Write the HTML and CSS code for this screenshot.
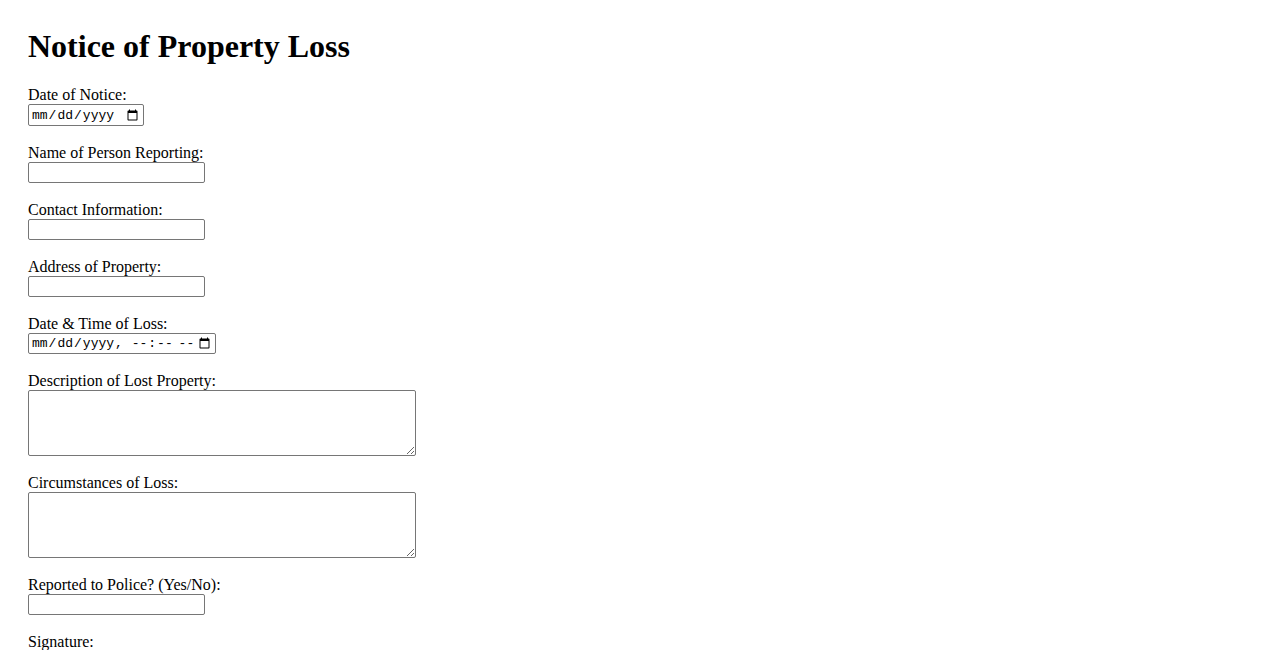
FILE: index.html
```html
<!DOCTYPE html>
<html lang="en">
<head>
<meta charset="utf-8">
<title>Notice of Property Loss</title>
<link rel="stylesheet" href="styles.css">
</head>
<body>
<div class="page">
  <h1 class="title">Notice of Property Loss</h1>
  <form class="form">
    <div class="field">
      <label class="label" for="notice-date">Date of Notice:</label>
      <input class="input input-date" type="date" id="notice-date">
    </div>
    <div class="field">
      <label class="label" for="reporter">Name of Person Reporting:</label>
      <input class="input input-text" type="text" id="reporter">
    </div>
    <div class="field">
      <label class="label" for="contact">Contact Information:</label>
      <input class="input input-text" type="text" id="contact">
    </div>
    <div class="field">
      <label class="label" for="address">Address of Property:</label>
      <input class="input input-text" type="text" id="address">
    </div>
    <div class="field">
      <label class="label" for="loss-time">Date &amp; Time of Loss:</label>
      <input class="input input-datetime" type="datetime-local" id="loss-time">
    </div>
    <div class="field">
      <label class="label" for="description">Description of Lost Property:</label>
      <textarea class="input input-area" id="description"></textarea>
    </div>
    <div class="field">
      <label class="label" for="circumstances">Circumstances of Loss:</label>
      <textarea class="input input-area" id="circumstances"></textarea>
    </div>
    <div class="field">
      <label class="label" for="police">Reported to Police? (Yes/No):</label>
      <input class="input input-text" type="text" id="police">
    </div>
    <div class="field">
      <label class="label" for="signature">Signature:</label>
      <input class="input input-text" type="text" id="signature">
    </div>
  </form>
</div>
</body>
</html>
```
FILE: styles.css
```css
html, body {
  margin: 0;
  padding: 0;
  background: #ffffff;
}

body {
  font-family: "Liberation Serif", "Times New Roman", serif;
  font-size: 16px;
  color: #000000;
}

.page {
  padding: 28px;
}

.title {
  margin: 0 0 21px 0;
  font-size: 32px;
  font-weight: bold;
  line-height: 37px;
}

.form {
  display: flex;
  flex-direction: column;
  gap: 18px;
}

.field {
  display: flex;
  flex-direction: column;
  align-items: flex-start;
}

.label {
  display: block;
  line-height: 18px;
  height: 18px;
}

.input {
  box-sizing: border-box;
  margin: 0;
  border: 1px solid #767676;
  border-radius: 2px;
  background: #ffffff;
  color: #000000;
  font-family: "Liberation Mono", "DejaVu Sans Mono", monospace;
  font-size: 13px;
  padding: 1px 2px;
}

.input-text {
  width: 177px;
  height: 21px;
}

.input-date {
  width: 116px;
  height: 22px;
}

.input-datetime {
  width: 188px;
  height: 21px;
}

.input-area {
  width: 388px;
  height: 66px;
  resize: both;
}
```
